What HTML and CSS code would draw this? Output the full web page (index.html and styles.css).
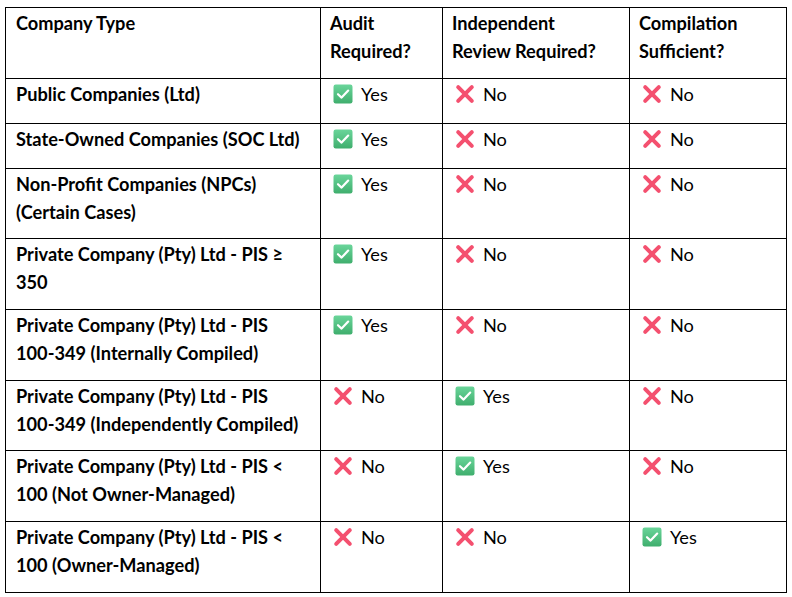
FILE: index.html
```html
<!DOCTYPE html>
<html lang="en">
<head>
<meta charset="utf-8">
<title>Company Type Requirements</title>
<link rel="stylesheet" href="styles.css">
</head>
<body>
<svg class="defs" width="0" height="0" aria-hidden="true">
  <defs>
    <linearGradient id="g" x1="0" y1="0" x2="0" y2="1">
      <stop offset="0" stop-color="#6ad59a"/>
      <stop offset="1" stop-color="#3fae6d"/>
    </linearGradient>
    <symbol id="yes" viewBox="0 0 20 20">
      <rect x="0.5" y="0.5" width="19" height="19" rx="2.2" fill="url(#g)"/>
      <path d="M5 10.2 L8.6 13.6 L15.2 6.6" fill="none" stroke="#fff" stroke-width="2.2" stroke-linecap="round" stroke-linejoin="round"/>
    </symbol>
    <symbol id="no" viewBox="0 0 20 20">
      <path d="M3.2 3.2 L16.8 16.8 M16.8 3.2 L3.2 16.8" fill="none" stroke="#f4506f" stroke-width="4" stroke-linecap="round"/>
    </symbol>
  </defs>
</svg>
<table class="grid">
  <colgroup>
    <col class="c1"><col class="c2"><col class="c3"><col class="c4">
  </colgroup>
  <thead>
    <tr class="two">
      <th>Company Type</th>
      <th>Audit<br>Required?</th>
      <th>Independent<br>Review Required?</th>
      <th>Compilation<br>Sufficient?</th>
    </tr>
  </thead>
  <tbody>
    <tr class="one">
      <th>Public Companies (Ltd)</th>
      <td><svg class="ic"><use href="#yes"/></svg>Yes</td>
      <td><svg class="ic"><use href="#no"/></svg>No</td>
      <td><svg class="ic"><use href="#no"/></svg>No</td>
    </tr>
    <tr class="one">
      <th>State-Owned Companies (SOC Ltd)</th>
      <td><svg class="ic"><use href="#yes"/></svg>Yes</td>
      <td><svg class="ic"><use href="#no"/></svg>No</td>
      <td><svg class="ic"><use href="#no"/></svg>No</td>
    </tr>
    <tr class="two">
      <th>Non-Profit Companies (NPCs)<br>(Certain Cases)</th>
      <td><svg class="ic"><use href="#yes"/></svg>Yes</td>
      <td><svg class="ic"><use href="#no"/></svg>No</td>
      <td><svg class="ic"><use href="#no"/></svg>No</td>
    </tr>
    <tr class="two">
      <th>Private Company (Pty) Ltd - PIS ≥<br>350</th>
      <td><svg class="ic"><use href="#yes"/></svg>Yes</td>
      <td><svg class="ic"><use href="#no"/></svg>No</td>
      <td><svg class="ic"><use href="#no"/></svg>No</td>
    </tr>
    <tr class="two">
      <th>Private Company (Pty) Ltd - PIS<br>100-349 (Internally Compiled)</th>
      <td><svg class="ic"><use href="#yes"/></svg>Yes</td>
      <td><svg class="ic"><use href="#no"/></svg>No</td>
      <td><svg class="ic"><use href="#no"/></svg>No</td>
    </tr>
    <tr class="two">
      <th>Private Company (Pty) Ltd - PIS<br>100-349 (Independently Compiled)</th>
      <td><svg class="ic"><use href="#no"/></svg>No</td>
      <td><svg class="ic"><use href="#yes"/></svg>Yes</td>
      <td><svg class="ic"><use href="#no"/></svg>No</td>
    </tr>
    <tr class="two">
      <th>Private Company (Pty) Ltd - PIS &lt;<br>100 (Not Owner-Managed)</th>
      <td><svg class="ic"><use href="#no"/></svg>No</td>
      <td><svg class="ic"><use href="#yes"/></svg>Yes</td>
      <td><svg class="ic"><use href="#no"/></svg>No</td>
    </tr>
    <tr class="two">
      <th>Private Company (Pty) Ltd - PIS &lt;<br>100 (Owner-Managed)</th>
      <td><svg class="ic"><use href="#no"/></svg>No</td>
      <td><svg class="ic"><use href="#no"/></svg>No</td>
      <td><svg class="ic"><use href="#yes"/></svg>Yes</td>
    </tr>
  </tbody>
</table>
</body>
</html>
```
FILE: styles.css
```css
html, body {
  background: #fff;
}
body {
  margin: 7px 0 0 5px;
  font-family: Lato, "Open Sans", sans-serif;
  font-size: 18.2px;
  line-height: 28px;
  color: #000;
}
.defs {
  position: absolute;
  width: 0;
  height: 0;
  overflow: hidden;
}
.grid {
  border-collapse: collapse;
  table-layout: fixed;
  width: 781px;
}
.c1 { width: 315px; }
.c2 { width: 122px; }
.c3 { width: 187px; }
.c4 { width: 157px; }
.grid th,
.grid td {
  border: 1px solid #000;
  vertical-align: top;
  text-align: left;
  padding: 1px 9px 15px 9px;
  white-space: nowrap;
}
.grid th {
  font-weight: 700;
}
.grid tr > :first-child {
  padding-left: 10px;
}
.grid td {
  font-weight: 400;
}
.grid tr.two > * {
  padding-bottom: 12.7px;
}
.ic {
  width: 20px;
  height: 20px;
  margin: 0 8px 0 3px;
  vertical-align: -3px;
}
```
